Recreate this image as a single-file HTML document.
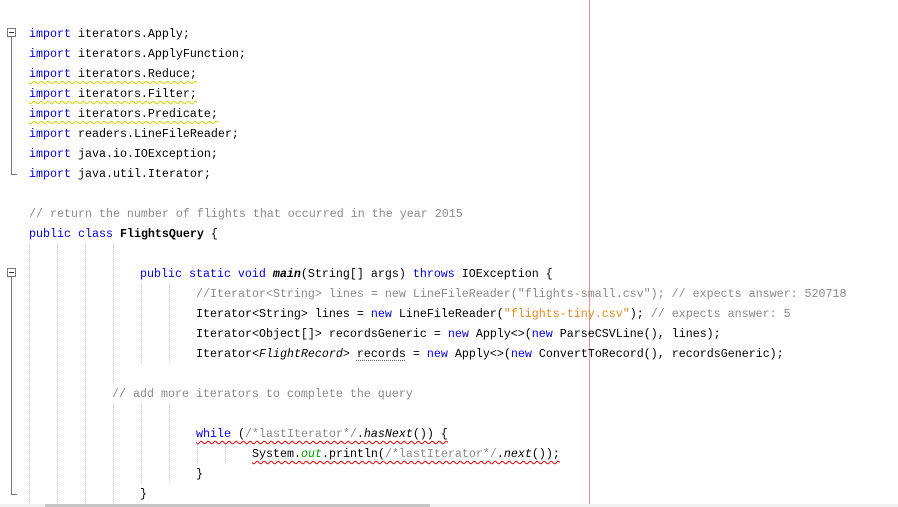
<!DOCTYPE html>
<html><head><meta charset="utf-8"><style>
html,body{margin:0;padding:0;width:898px;height:507px;overflow:hidden;background:#fff;position:relative}
.l{position:absolute;left:29px;height:20px;line-height:20px;white-space:pre;font-family:"Liberation Mono","Noto Sans CJK SC",monospace;font-size:11.67px;color:#000;margin-top:1px}
.k{color:#0000e0}.c{color:#8a8a8a}.s{color:#e08a1e}.b{font-weight:bold}.i{font-style:italic}.g{color:#00a000;font-style:italic}
.w{text-decoration:underline wavy #d4d400;text-decoration-thickness:1px;text-underline-offset:3px}
.r{text-decoration:underline wavy #e00000;text-decoration-thickness:1px;text-underline-offset:3px}
.u{text-decoration:underline dotted #666;text-underline-offset:3px}
.gd{position:absolute;width:0;border-left:1px dotted #d0d0d0}
.box{position:absolute;left:7px;width:9px;height:9px;border:1px solid #777;background:#fff;box-sizing:border-box}
.box:after{content:"";position:absolute;left:1px;top:3px;width:5px;height:1px;background:#333}
.vl{position:absolute;left:11px;width:1px;background:#777}
.hl{position:absolute;left:11px;width:6px;height:1px;background:#777}
</style></head><body>
<div class="box" style="top:28px"></div><div class="vl" style="top:37px;height:137px"></div><div class="hl" style="top:174px"></div>
<div class="box" style="top:268px"></div><div class="vl" style="top:277px;height:217px"></div><div class="hl" style="top:494px"></div>
<div class="gd" style="left:29px;top:244px;height:260px"></div>
<div class="gd" style="left:57px;top:244px;height:260px"></div>
<div class="gd" style="left:85px;top:244px;height:260px"></div>
<div class="gd" style="left:113px;top:244px;height:140px"></div>
<div class="gd" style="left:113px;top:404px;height:100px"></div>
<div class="gd" style="left:141px;top:284px;height:80px"></div>
<div class="gd" style="left:169px;top:284px;height:80px"></div>
<div class="gd" style="left:141px;top:404px;height:80px"></div>
<div class="gd" style="left:169px;top:404px;height:80px"></div>
<div class="gd" style="left:197px;top:444px;height:20px"></div>
<div class="gd" style="left:225px;top:444px;height:20px"></div>
<div style="position:absolute;left:589px;top:0;width:1px;height:504px;background:#f49090"></div>

<div class="l" style="top:23px"><span class="k">import</span> iterators.Apply;</div>
<div class="l" style="top:43px"><span class="k">import</span> iterators.ApplyFunction;</div>
<div class="l" style="top:63px"><span class="w"><span class="k">import</span> iterators.Reduce;</span></div>
<div class="l" style="top:83px"><span class="w"><span class="k">import</span> iterators.Filter;</span></div>
<div class="l" style="top:103px"><span class="w"><span class="k">import</span> iterators.Predicate;</span></div>
<div class="l" style="top:123px"><span class="k">import</span> readers.LineFileReader;</div>
<div class="l" style="top:143px"><span class="k">import</span> java.io.IOException;</div>
<div class="l" style="top:163px"><span class="k">import</span> java.util.Iterator;</div>
<div class="l c" style="top:203px">// return the number of flights that occurred in the year 2015</div>
<div class="l" style="top:223px"><span class="k">public class</span> <span class="b">FlightsQuery</span> {</div>
<div class="l" style="top:263px;left:140px"><span class="k">public static void</span> <span class="b i">main</span>(String[] args) <span class="k">throws</span> IOException {</div>
<div class="l c" style="top:283px;left:196px">//Iterator&lt;String&gt; lines = new LineFileReader("flights-small.csv"); // expects answer: 520718</div>
<div class="l" style="top:303px;left:196px">Iterator&lt;String&gt; lines = <span class="k">new</span> LineFileReader(<span class="s">"flights-tiny.csv"</span>); <span class="c">// expects answer: 5</span></div>
<div class="l" style="top:323px;left:196px">Iterator&lt;Object[]&gt; recordsGeneric = <span class="k">new</span> Apply&lt;&gt;(<span class="k">new</span> ParseCSVLine(), lines);</div>
<div class="l" style="top:343px;left:196px">Iterator&lt;<span class="i">FlightRecord</span>&gt; <span class="u">records</span> = <span class="k">new</span> Apply&lt;&gt;(<span class="k">new</span> ConvertToRecord(), recordsGeneric);</div>
<div class="l c" style="top:383px;left:112px">// add more iterators to complete the query</div>
<div class="l" style="top:423px;left:196px"><span class="r"><span class="k">while</span> (<span class="c">/*lastIterator*/</span>.<span class="i">hasNext</span>()) {</span></div>
<div class="l" style="top:443px;left:252px"><span class="r">System.<span class="g">out</span>.println(<span class="c">/*lastIterator*/</span>.<span class="i">next</span>());</span></div>
<div class="l" style="top:463px;left:196px">}</div>
<div class="l" style="top:483px;left:140px">}</div>

<div style="position:absolute;left:0;top:504px;width:898px;height:3px;background:#f0f0f0"></div>
<div style="position:absolute;left:45px;top:504px;width:385px;height:3px;background:#c6c6c6"></div>
</body></html>
